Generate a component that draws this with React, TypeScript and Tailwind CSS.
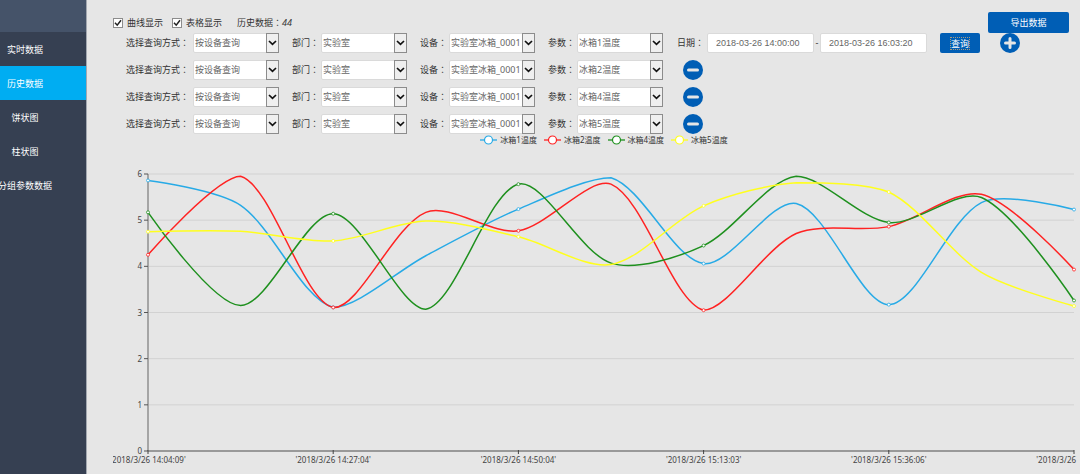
import React, { useState } from "react";
import clsx from "clsx";

type Series = { name: string; color: string; values: number[] };
type Point = { x: number; y: number };

const menu = ["实时数据", "历史数据", "饼状图", "柱状图", "分组参数数据"];

const series: Series[] = [
  {
    name: "冰箱1温度",
    color: "#27aae6",
    values: [5.86, 5.32, 3.11, 4.23, 5.24, 5.92, 4.06, 5.36, 3.17, 5.38, 5.23],
  },
  {
    name: "冰箱2温度",
    color: "#ff2222",
    values: [4.25, 5.95, 3.11, 5.17, 4.77, 5.78, 3.05, 4.71, 4.86, 5.56, 3.93],
  },
  {
    name: "冰箱4温度",
    color: "#1e901e",
    values: [5.17, 3.15, 5.14, 3.07, 5.78, 4.07, 4.45, 5.95, 4.95, 5.49, 3.26],
  },
  {
    name: "冰箱5温度",
    color: "#ffff1e",
    values: [4.75, 4.76, 4.55, 4.98, 4.64, 4.04, 5.31, 5.81, 5.61, 3.87, 3.14],
  },
];

const timeLabels = [
  "'2018/3/26 14:04:09'",
  "'2018/3/26 14:27:04'",
  "'2018/3/26 14:50:04'",
  "'2018/3/26 15:13:03'",
  "'2018/3/26 15:36:06'",
  "'2018/3/26 15:59:06'",
];

const LEFT = 35;
const RIGHT = 961;
const TOP = 28;
const BOTTOM = 305;
const STEP = (RIGHT - LEFT) / 10;
const SMOOTH = 0.3;

const toY = (value: number) => BOTTOM - (value * (BOTTOM - TOP)) / 6;

// Control points follow the neighbours' direction and stay inside the data range
function smoothPath(points: Point[]) {
  const minY = Math.min(...points.map((p) => p.y));
  const maxY = Math.max(...points.map((p) => p.y));
  const clamp = (y: number) => Math.max(minY, Math.min(maxY, y));

  const controls = points.map((p, i) => {
    const prev = points[i - 1];
    const next = points[i + 1];
    if (!prev || !next) return { before: p, after: p };
    const d0 = Math.hypot(p.x - prev.x, p.y - prev.y);
    const d1 = Math.hypot(next.x - p.x, next.y - p.y);
    const vx = (next.x - prev.x) * SMOOTH;
    const vy = (next.y - prev.y) * SMOOTH;
    const r0 = d0 / (d0 + d1);
    const r1 = d1 / (d0 + d1);
    return {
      before: { x: p.x - vx * r0, y: clamp(p.y - vy * r0) },
      after: { x: p.x + vx * r1, y: clamp(p.y + vy * r1) },
    };
  });

  return points
    .map((p, i) => {
      if (i === 0) return `M${p.x},${p.y}`;
      const a = controls[i - 1].after;
      const b = controls[i].before;
      return `C${a.x},${a.y} ${b.x},${b.y} ${p.x},${p.y}`;
    })
    .join(" ");
}

function Sidebar() {
  const [active, setActive] = useState("历史数据");

  return (
    <nav className="w-[87px] shrink-0 overflow-hidden border-r border-[#a3a8b0] bg-[#364052] text-[9px] text-white">
      <div className="h-8 bg-[#455369]" />
      {menu.map((item) => (
        <a
          key={item}
          href="#"
          onClick={() => setActive(item)}
          className={clsx(
            "flex h-[34px] items-center justify-center whitespace-nowrap pr-9 pt-px",
            item === active && "bg-[#00adf2]"
          )}
        >
          {item}
        </a>
      ))}
    </nav>
  );
}

// The Japanese face centres the full-width colon in its box
function Colon() {
  return <span className="font-['Noto_Sans_CJK_JP',sans-serif] leading-none">：</span>;
}

function CheckField({ id, label }: { id: string; label: string }) {
  return (
    <div className="flex items-center gap-1">
      <span className="relative flex">
        <input
          type="checkbox"
          id={id}
          defaultChecked
          className="peer size-[10px] appearance-none border border-[#8c8c8c] bg-white"
        />
        <svg
          viewBox="0 0 10 10"
          className="pointer-events-none absolute inset-0 hidden size-[10px] peer-checked:block"
        >
          <path d="M2 4.8 4.2 7.2 8 2.2" fill="none" stroke="#222" strokeWidth="1.5" />
        </svg>
      </span>
      <label htmlFor={id}>{label}</label>
    </div>
  );
}

function SelectField({
  id,
  label,
  options,
  wide,
}: {
  id: string;
  label: string;
  options: string[];
  wide?: boolean;
}) {
  return (
    <div className="flex items-center">
      <label
        htmlFor={id}
        className={clsx("whitespace-nowrap", wide ? "w-[67px]" : "w-[29px]")}
      >
        {label}
        <Colon />
      </label>
      <div className="relative">
        <select
          id={id}
          className="block h-5 w-[86px] appearance-none rounded-xs border border-[#dadada] bg-white pl-px pr-3 text-[9px] text-[#666]"
        >
          {options.map((option) => (
            <option key={option}>{option}</option>
          ))}
        </select>
        <span className="pointer-events-none absolute inset-y-0 right-0 flex w-[13px] items-center justify-center border border-[#8c8c8c] bg-[#efefef]">
          <svg viewBox="0 0 9 6" className="h-[6px] w-[9px]">
            <path d="M1 1 4.5 4.3 8 1" fill="none" stroke="#111" strokeWidth="1.7" />
          </svg>
        </span>
      </div>
    </div>
  );
}

function RoundButton({ kind }: { kind: "add" | "remove" }) {
  return (
    <button
      type="button"
      aria-label={kind === "add" ? "添加" : "删除"}
      className="size-5 shrink-0 rounded-full bg-[#005eb5]"
    >
      <svg viewBox="0 0 20 20" className="size-5">
        <path
          d={kind === "add" ? "M5.5 10H14.5M10 5.5V14.5" : "M5.5 10H14.5"}
          stroke="#e6e6e6"
          strokeWidth="3"
          strokeLinecap="round"
        />
      </svg>
    </button>
  );
}

function DateInput({ label, value }: { label: string; value: string }) {
  return (
    <input
      type="text"
      aria-label={label}
      defaultValue={value}
      className="h-5 w-[107px] rounded-xs border border-[#dadada] bg-white px-2 font-['Liberation_Sans',sans-serif] text-[9px] text-[#666]"
    />
  );
}

function QueryRow({ index, param }: { index: number; param: string }) {
  return (
    <div className="flex items-center">
      <div className="flex gap-[13px]">
        <SelectField id={`mode${index}`} label="选择查询方式" options={["按设备查询"]} wide />
        <SelectField id={`dept${index}`} label="部门" options={["实验室"]} />
        <SelectField id={`device${index}`} label="设备" options={["实验室冰箱_0001"]} />
        <SelectField
          id={`param${index}`}
          label="参数"
          options={[param, ...series.map((s) => s.name).filter((n) => n !== param)]}
        />
      </div>
      {index === 0 ? (
        <div className="ml-[14px] flex items-center">
          <span className="w-[30px] whitespace-nowrap">
            日期
            <Colon />
          </span>
          <DateInput label="开始日期" value="2018-03-26 14:00:00" />
          <span className="w-[6px] text-center">-</span>
          <DateInput label="结束日期" value="2018-03-26 16:03:20" />
          <button
            type="submit"
            className="ml-[13px] mr-5 flex h-5 w-10 items-center justify-center rounded-xs bg-[#005eb5] text-white"
          >
            <span className="border border-dotted border-[#a89a80] leading-[11px]">查询</span>
          </button>
          <RoundButton kind="add" />
        </div>
      ) : (
        <div className="ml-5 flex">
          <RoundButton kind="remove" />
        </div>
      )}
    </div>
  );
}

function Legend() {
  return (
    <ul className="flex justify-center gap-[7px] pl-[18px] text-[8px] leading-3">
      {series.map((s) => (
        <li key={s.name} className="flex items-center gap-[3px]">
          <svg viewBox="0 0 17 10" className="h-[10px] w-[17px]">
            <path d="M0 5H17" stroke={s.color} strokeWidth="1.3" />
            <circle cx="8.5" cy="5" r="4" fill="#fff" stroke={s.color} strokeWidth="1.2" />
          </svg>
          {s.name}
        </li>
      ))}
    </ul>
  );
}

function Chart() {
  return (
    <svg
      viewBox="0 0 964 328"
      className="block h-auto w-full overflow-hidden font-['Noto_Sans',sans-serif] text-[8px]"
    >
      {[1, 2, 3, 4, 5, 6].map((n) => (
        <path key={n} d={`M${LEFT} ${toY(n)}H${RIGHT}`} stroke="#d2d2d2" />
      ))}
      <path d={`M${LEFT} ${TOP}V${BOTTOM}`} stroke="#a5a5a5" strokeWidth="2" />
      <path d={`M${LEFT} ${BOTTOM}H${RIGHT}`} stroke="#999" strokeWidth="2" />
      {[0, 1, 2, 3, 4, 5, 6].map((n) => (
        <g key={n}>
          <path d={`M${LEFT - 4} ${toY(n)}H${LEFT}`} stroke="#555" />
          <text x={LEFT - 6} y={toY(n) + 3} textAnchor="end" fill="#444">
            {n}
          </text>
        </g>
      ))}
      {timeLabels.map((label, i) => (
        <g key={label}>
          <path d={`M${LEFT + i * STEP * 2} ${BOTTOM - 1}v4`} stroke="#444" />
          <text
            x={LEFT + i * STEP * 2}
            y={BOTTOM + 12}
            textAnchor="middle"
            fill="#444"
          >
            {label}
          </text>
        </g>
      ))}
      {series.map((s) => {
        const points = s.values.map((v, i) => ({ x: LEFT + i * STEP, y: toY(v) }));
        return (
          <g key={s.name} stroke={s.color}>
            <path d={smoothPath(points)} fill="none" strokeWidth="1.5" />
            {points
              .filter((_, i) => i % 2 === 0)
              .map((p) => (
                <circle key={p.x} cx={p.x} cy={p.y} r="1.5" fill="#fff" strokeWidth="0.8" />
              ))}
          </g>
        );
      })}
    </svg>
  );
}

export default function App() {
  return (
    <div className="flex min-h-screen bg-[#e6e6e6] font-['Noto_Sans','Noto_Sans_CJK_SC',sans-serif] text-[9px] text-[#333]">
      <Sidebar />
      <main className="min-w-0 flex-1 pl-[26px] pr-[3px] pt-3">
        <form onSubmit={(e) => e.preventDefault()}>
          <div className="flex h-[21px] items-center justify-between pr-2">
            <div className="flex items-center">
              <CheckField id="showCurve" label="曲线显示" />
              <div className="ml-[9px] mr-[15px]">
                <CheckField id="showTable" label="表格显示" />
              </div>
              <span>
                历史数据
                <Colon />
                <i>44</i>
              </span>
            </div>
            <button
              type="button"
              className="h-[21px] w-[81px] rounded-xs bg-[#005eb5] text-white"
            >
              导出数据
            </button>
          </div>
          <div className="flex flex-col gap-[7px] pl-[13px]">
            {series.map((s, i) => (
              <QueryRow key={s.name} index={i} param={s.name} />
            ))}
          </div>
        </form>
        <Legend />
        <Chart />
      </main>
    </div>
  );
}
